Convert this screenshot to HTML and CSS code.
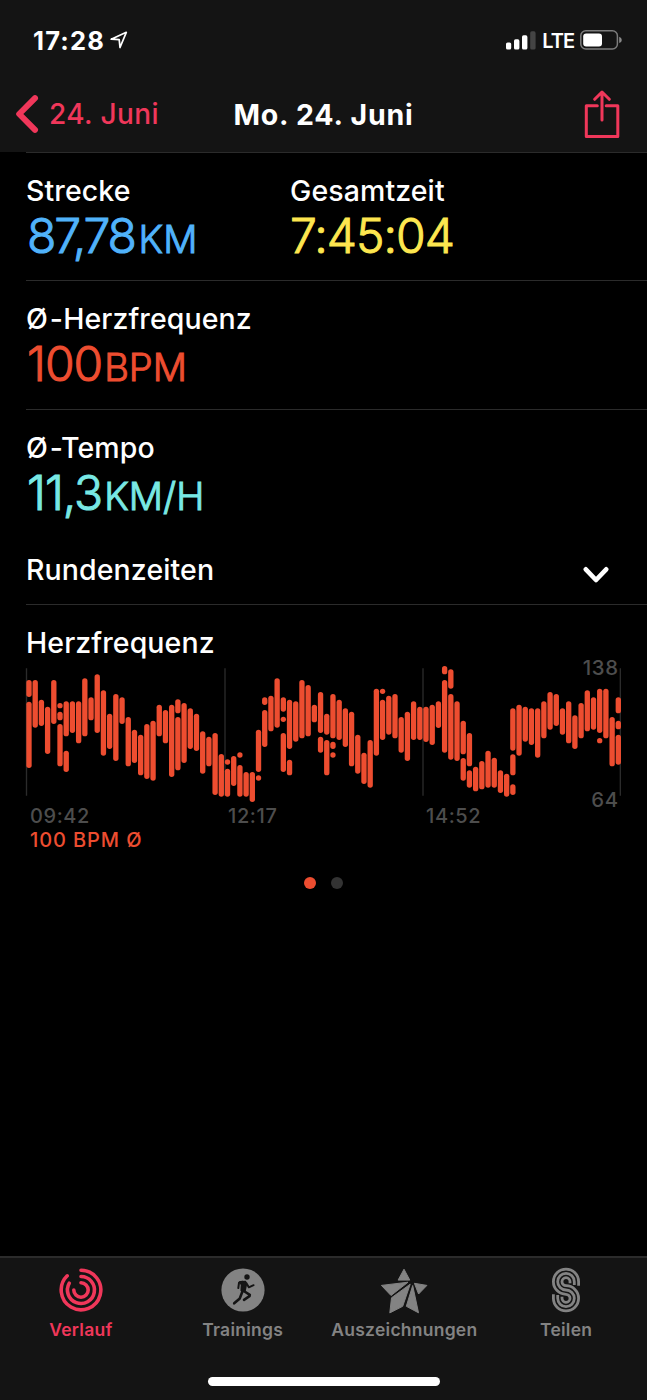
FILE: index.html
```html
<!DOCTYPE html>
<html lang="de">
<head>
  <meta charset="UTF-8">
  <meta name="viewport" content="width=device-width, initial-scale=1.0">
  <title>Mo. 24. Juni</title>
  <link rel="stylesheet" href="styles.css">
</head>
<body>
  <header>
    <div class="status-bar">
      <div class="status-left">
        <span class="time">17:28</span>
        <svg class="location" width="18" height="18" viewBox="0 0 18 18"><path d="M1.2 8.2 16.3 1.3 10 16.5 9.2 8.7Z"/></svg>
      </div>
      <div class="status-right">
        <svg width="30" height="19" viewBox="0 0 30 19" fill="#fff">
          <rect x="0" y="11.5" width="5.2" height="7" rx="1.6"/>
          <rect x="8" y="8.3" width="5.4" height="10.2" rx="1.6"/>
          <rect x="16" y="4.3" width="5.4" height="14.2" rx="1.6"/>
          <rect x="24.2" y="0.3" width="5.4" height="18.2" rx="1.6" fill="#444"/>
        </svg>
        <span class="network">LTE</span>
        <svg width="43" height="20" viewBox="0 0 43 20">
          <rect x="0.8" y="0.8" width="36.6" height="18.2" rx="5" fill="none" stroke="#7c7c7c" stroke-width="1.5"/>
          <rect x="3.2" y="3.4" width="18.8" height="13" rx="3" fill="#fff"/>
          <path d="M39.2 6.7Q41.8 7.5 41.8 9.9T39.2 13.1Z" fill="#8a8a8a"/>
        </svg>
      </div>
    </div>
    <nav class="nav-bar">
      <a class="back">
        <svg width="24" height="38" viewBox="0 0 24 38"><path d="M20 3.2 4.2 19 20 34.8"/></svg>
        <span>24. Juni</span>
      </a>
      <h1>Mo. 24. Juni</h1>
      <a class="share">
        <svg width="36" height="49" viewBox="0 0 36 49"><path d="M13.3 15.8H2.3V46.4H33.8V15.8H22.2M18 30V2.3M10.7 9.3 18 2 25.3 9.3"/></svg>
      </a>
    </nav>
  </header>

  <main>
    <section class="row">
      <div class="metric distance">
        <h2>Strecke</h2>
        <p class="value">87,78<small>KM</small></p>
      </div>
      <div class="metric duration">
        <h2>Gesamtzeit</h2>
        <p class="value">7:45:04</p>
      </div>
    </section>
    <section class="row">
      <div class="metric heart">
        <h2><span class="avg">Ø</span>-Herzfrequenz</h2>
        <p class="value">100<small>BPM</small></p>
      </div>
    </section>
    <section class="row pace-row">
      <div class="metric pace">
        <h2><span class="avg">Ø</span>-Tempo</h2>
        <p class="value">11,3<small>KM/H</small></p>
      </div>
    </section>
    <section class="laps">
      <h2>Rundenzeiten</h2>
      <svg width="26" height="18" viewBox="0 0 26 18"><path d="M2.8 3.3 13 14 23.2 3.3"/></svg>
    </section>
    <section class="chart">
      <h2>Herzfrequenz</h2>
      <svg id="heart-chart" width="595" height="150" viewBox="0 0 1785 450">
        <g class="grid">
          <path d="M1.5 40V422M597 40V422M1191 40V422M1783 40V422"/>
        </g>
        <g id="bars"></g>
        <text x="1778" y="60" text-anchor="end">138</text>
        <text x="1778" y="455" text-anchor="end">64</text>
      </svg>
      <div class="times"><span>09:42</span><span>12:17</span><span>14:52</span></div>
      <p class="average">100 BPM Ø</p>
    </section>
    <div class="pages"><i class="active"></i><i></i></div>
  </main>

  <footer>
    <div class="tabs">
      <a class="tab active">
        <svg width="48" height="48" viewBox="-24 -24 48 48" fill="none" stroke="currentColor" stroke-width="3.6" stroke-linecap="round">
          <path d="M0-19.8A19.8 19.8 0 1 1-13.8-14.2"/>
          <path d="M0-13.5A13.5 13.5 0 1 1-11.7-6.8"/>
          <path d="M0-7.2A7.2 7.2 0 1 1-7.2 0"/>
        </svg>
        <span>Verlauf</span>
      </a>
      <a class="tab">
        <svg width="48" height="48" viewBox="-24 -24 48 48">
          <circle r="21.6" fill="currentColor"/>
          <g fill="none" stroke="#141414" stroke-linecap="round" stroke-linejoin="round">
            <circle cx="4" cy="-13" r="2.7" fill="#141414" stroke="none"/>
            <path d="M-3.2-8.2 2.5-8.6 3.2-5 2 1-1.8.5 -1.5-5Z" fill="#141414" stroke-width="1.5"/>
            <path d="M-.5-8.3-4-7.2-4.7-1.9M3.3-7 5.8-2.7 10.6-4.8" stroke-width="2"/>
            <path d="M-.3.7-3.2 8.4-8.8 13.3M.8 1 6.8 4.8 6.5 6.2 1 9.8" stroke-width="2.6"/>
          </g>
        </svg>
        <span>Trainings</span>
      </a>
      <a class="tab">
        <svg width="48" height="48" viewBox="-24 -24 48 48" fill="currentColor" stroke="currentColor" stroke-width="1" stroke-linejoin="round">
          <path d="M0-20.8 5.8-9.9H-5.9Z"/>
          <path d="M-22.6-4.6 4-7.8-13 5.5Z"/>
          <path d="M-12.5 7.8 6.2-5.8-1.3 16.3-14.2 22.9Z"/>
          <path d="M8.7-4.5 14.5 22.8 2.3 16.3Z"/>
          <path d="M10.4-6.7 22.9-4.6 14.6 4Z"/>
        </svg>
        <span>Auszeichnungen</span>
      </a>
      <a class="tab">
        <svg width="48" height="48" viewBox="-24 -24 48 48" fill="none" stroke="currentColor" stroke-width="2.8">
          <path d="M12.6-4.2Q12.6-6 12.6-8.3A12.6 12.6 0 1 0 0 4.3A4 4 0 1 1-4 8.3V6.8"/>
          <path d="M8.3-5V-8.3A8.3 8.3 0 1 0 0 0A8.3 8.3 0 1 1-8.3 8.3V5"/>
          <path d="M4-6.8V-8.3A4 4 0 1 0 0-4.3A12.6 12.6 0 1 1-12.6 8.3V4.2"/>
        </svg>
        <span>Teilen</span>
      </a>
    </div>
    <div class="home-indicator"></div>
  </footer>
  <script src="chart.js"></script>
</body>
</html>
```
FILE: styles.css
```css
* {
  box-sizing: border-box;
}
body {
  margin: 0;
  height: 1400px;
  display: flex;
  flex-direction: column;
  background: #000;
  color: #fff;
  font-family: Inter, "Liberation Sans", sans-serif;
  overflow: hidden;
}
h1, h2, p {
  margin: 0;
}
svg {
  display: block;
}
header {
  height: 152px;
  background: #141414;
}
.status-bar {
  height: 76px;
  padding: 4px 24px 0 33px;
  display: flex;
  justify-content: space-between;
  align-items: center;
}
.status-left, .status-right {
  display: flex;
  align-items: center;
}
.time {
  font-size: 25.5px;
  font-weight: 700;
  letter-spacing: 1.2px;
}
.location {
  margin-left: 5px;
  fill: none;
  stroke: #fff;
  stroke-width: 1.7;
  stroke-linejoin: round;
}
.network {
  margin: 2px 6px 0 6px;
  font-size: 20px;
  font-weight: 600;
  letter-spacing: -1px;
}
.nav-bar {
  height: 76px;
  padding: 0 15px;
  display: grid;
  grid-template-columns: 1fr auto 1fr;
  align-items: center;
}
.back {
  display: flex;
  align-items: center;
  gap: 10px;
  color: #f0375a;
  font-size: 28px;
  font-weight: 500;
  letter-spacing: 0.4px;
}
.back svg, .share svg, .laps svg {
  fill: none;
  stroke: #f0375a;
  stroke-width: 6;
  stroke-linecap: round;
  stroke-linejoin: round;
}
.nav-bar h1 {
  font-size: 28.5px;
  font-weight: 700;
  letter-spacing: 0.8px;
}
.share {
  justify-self: end;
  margin-right: 12px;
}
.share svg {
  stroke-width: 3;
}
main {
  flex: 1;
  padding-left: 26px;
  border-top: 1px solid #000;
}
h2 {
  font-size: 28.5px;
  font-weight: 550;
  line-height: 36px;
  letter-spacing: 0.1px;
}
.avg {
  letter-spacing: 2px;
}
.row {
  display: grid;
  grid-template-columns: 264px 1fr;
  height: 129px;
  padding-top: 20px;
  border-bottom: 1px solid #2b2b2b;
}
.row:first-child {
  margin-top: -1px;
  border-top: 1px solid #2b2b2b;
}
.pace-row {
  border-bottom: none;
}
.value {
  font-size: 48px;
  font-weight: 300;
  line-height: 54px;
  -webkit-text-stroke: 1px currentColor;
  stroke-linejoin: round;
}
.value small {
  font-size: 38px;
  letter-spacing: 0;
}
.distance .value {
  color: #50b2fa;
  padding-left: 1px;
  letter-spacing: -2.2px;
}
.distance small {
  margin-left: 4px;
}
.duration .value {
  color: #fde64f;
  letter-spacing: -1px;
}
.heart .value {
  color: #ed4d30;
  padding-left: 1px;
  letter-spacing: -1px;
}
.heart small {
  margin-left: 2px;
}
.pace .value {
  color: #78e8e4;
  padding-left: 1px;
  letter-spacing: -1px;
}
.pace small {
  margin-left: 2px;
}
.laps {
  height: 66px;
  padding: 13px 38px 0 0;
  display: flex;
  justify-content: space-between;
  border-bottom: 1px solid #2b2b2b;
}
.laps svg {
  margin-top: 14px;
  stroke: #fff;
  stroke-width: 4.6;
}
.chart {
  padding-top: 20px;
}
.chart svg {
  margin-top: -6px;
  overflow: visible;
}
.grid path {
  stroke: #2b2b2b;
  stroke-width: 4;
}
#bars line {
  stroke: #ed4d30;
  stroke-width: 16;
  stroke-linecap: round;
}
.chart text {
  fill: #4d4d4d;
  font-size: 61px;
  font-weight: 550;
  letter-spacing: 2px;
}
.times {
  display: grid;
  grid-template-columns: 198px 198px 1fr;
  margin-top: -1px;
  padding-left: 4px;
  color: #4d4d4d;
  font-size: 20px;
  font-weight: 550;
  line-height: 24px;
  letter-spacing: 0.6px;
}
.average {
  padding-left: 4px;
  color: #ed4d30;
  font-size: 20px;
  font-weight: 500;
  line-height: 24px;
  letter-spacing: 0.9px;
}
.pages {
  display: flex;
  justify-content: center;
  gap: 15px;
  margin: 25px 26px 0 0;
}
.pages i {
  width: 12px;
  height: 12px;
  border-radius: 50%;
  background: #333;
}
.pages .active {
  background: #ed4d30;
}
footer {
  height: 144px;
  background: #141414;
  border-top: 2px solid #2b2b2b;
}
.tabs {
  display: grid;
  grid-template-columns: repeat(4, 25%);
  height: 119px;
  padding-top: 8px;
}
.tab {
  display: flex;
  flex-direction: column;
  align-items: center;
  color: #838383;
  font-size: 17.5px;
  font-weight: 600;
  line-height: 24px;
  letter-spacing: 0.25px;
}
.tab span {
  margin-top: 4px;
}
.tab.active {
  color: #f0375a;
}
.home-indicator {
  width: 232px;
  height: 9px;
  margin: 0 auto;
  border-radius: 5px;
  background: #fff;
}
```
FILE: chart.js
```js
// one entry per column: top, bottom of each segment
const columns = [
  [75,126,140,339], [75,218], [134,213], [155,297], [75,207], [144,160,170,196,207,334],
  [139,244,287,351], [139,234], [139,265], [70,244], [127,196], [58,234],
  [106,302], [176,282], [117,318], [127,207], [186,334], [224,324],
  [239,361], [207,372], [197,377], [149,244], [165,265], [149,366],
  [133,175,186,346], [144,324], [160,282], [176,288], [229,356], [245,334],
  [234,420], [297,425], [313,329,341,425], [303,393], [292,308,330,425], [351,425],
  [351,441], [224,351,361,377], [127,150,165,276], [122,229], [70,218], [127,170,185,201,234,351],
  [134,282,314,361], [139,260], [75,250], [90,244], [149,202], [111,234,245,293],
  [176,239,255,361], [117,250,260,282,292,308], [134,255], [160,276], [170,334], [239,356],
  [293,387], [255,398], [101,302], [101,117,134,255], [122,239], [117,250],
  [186,293], [170,318], [139,255], [155,255], [155,261], [149,270],
  [139,219], [33,58,75,293], [43,101,117,314], [139,318], [197,298,309,377], [234,334,346,398],
  [335,409], [318,403], [287,398], [308,398], [346,414], [356,425],
  [160,287,298,361,388,420], [149,302], [155,260], [160,270], [160,308], [139,250],
  [111,224], [117,213], [160,239], [139,265], [181,282], [144,250],
  [106,229], [127,224], [101,234,249,265], [101,250], [186,334], [127,175,197,223,239,329]
];

const bars = document.getElementById('bars');
columns.forEach((segments, i) => {
  const x = 9 + i * 18.61;
  for (let s = 0; s < segments.length; s += 2) {
    const line = document.createElementNS('http://www.w3.org/2000/svg', 'line');
    line.setAttribute('x1', x);
    line.setAttribute('x2', x);
    line.setAttribute('y1', segments[s] + 8);
    line.setAttribute('y2', segments[s + 1] - 7.9);
    bars.appendChild(line);
  }
});
```
